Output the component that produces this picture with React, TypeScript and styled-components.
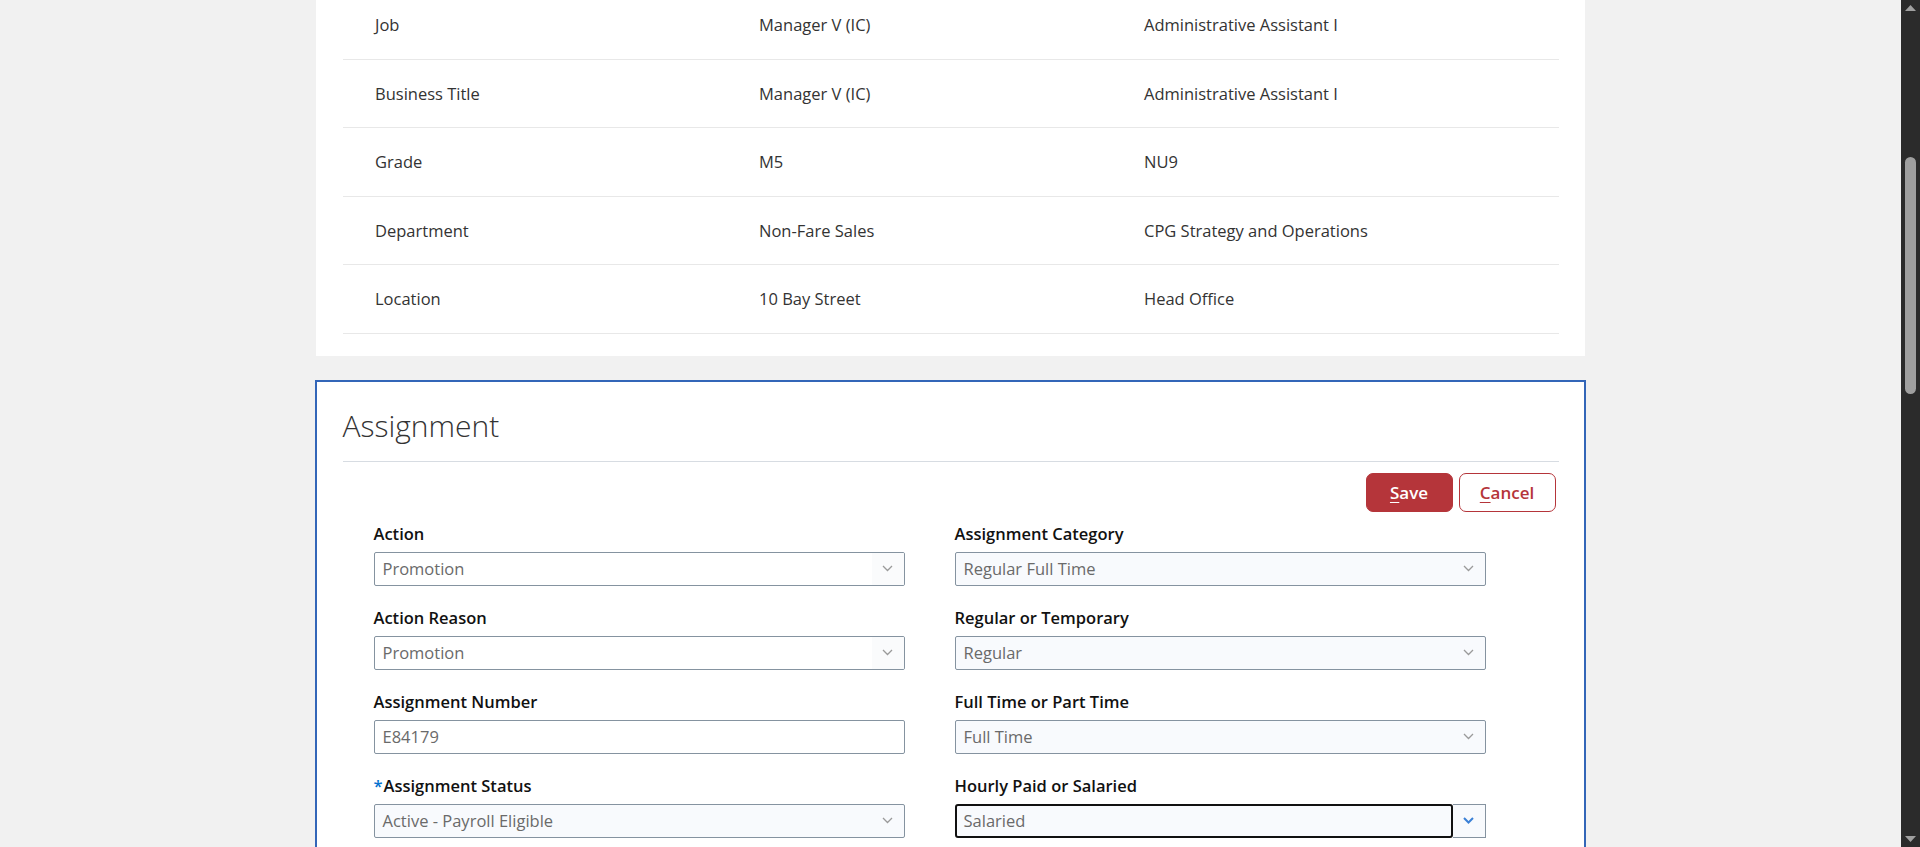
import React from "react";
import styled, { createGlobalStyle } from "styled-components";

const Global = createGlobalStyle`
  html, body { margin: 0; padding: 0; height: 847px; overflow: hidden; }
  body { font-family: "Open Sans", "Noto Sans", Arial, sans-serif; background: #f1f1f1; }
  * { box-sizing: border-box; }
`;

const Page = styled.div`
  display: flex;
  height: 847px;
  overflow: hidden;
  background: #f1f1f1;
`;

const Main = styled.main`
  flex: 1;
  display: flex;
  flex-direction: column;
  align-items: center;
  gap: 24px;
  margin-top: -9px;
`;

const Card = styled.section`
  width: 1269px;
  background: #fff;
  padding: 0 26px 22px 27px;
  flex-shrink: 0;
`;

const Row = styled.div`
  display: grid;
  grid-template-columns: 384px 385px 1fr;
  align-items: center;
  height: 68.5px;
  padding-left: 32px;
  border-bottom: 1px solid #e8e8e8;
  font-size: 16.5px;
  color: #333;
`;

const EditCard = styled.section`
  width: 1271px;
  margin-left: -1px;
  background: #fff;
  border: 2px solid #3366b8;
  padding: 0 25px 60px 26px;
  flex-shrink: 0;
`;

const Header = styled.div`
  padding: 25px 0 16px;
  border-bottom: 1px solid #d7dce2;
`;

const Title = styled.h2`
  margin: 0;
  font-size: 30px;
  line-height: 38px;
  font-weight: 300;
  color: #333;
`;

const Actions = styled.div`
  display: flex;
  justify-content: flex-end;
  gap: 6px;
  padding: 11px 3px 11px 0;
`;

const Btn = styled.button<{ $primary?: boolean }>`
  height: 39px;
  width: ${(p) => (p.$primary ? "87px" : "97px")};
  border-radius: 7px;
  border: 1px solid #b5353a;
  background: ${(p) => (p.$primary ? "#b5353a" : "#fff")};
  color: ${(p) => (p.$primary ? "#fff" : "#b5353a")};
  font-family: inherit;
  font-size: 17px;
  font-weight: 600;
  cursor: pointer;
  u { text-underline-offset: 3px; }
`;

const FormGrid = styled.div`
  display: grid;
  grid-template-columns: 531px 531px;
  column-gap: 50px;
  row-gap: 21px;
  padding-left: 31px;
  grid-auto-flow: column;
  grid-template-rows: repeat(4, auto);
`;

const Field = styled.div`
  display: flex;
  flex-direction: column;
  gap: 7px;
`;

const Label = styled.label`
  font-size: 16.5px;
  line-height: 22px;
  font-weight: 600;
  color: #111;
`;

const Req = styled.span`
  color: #0572ce;
  margin-right: 1px;
`;

const Box = styled.div<{ $tint?: boolean }>`
  display: flex;
  align-items: center;
  height: 34px;
  border: 1px solid #8593a0;
  border-radius: 2px;
  background: ${(p) => (p.$tint ? "#f8fafd" : "#fff")};
  overflow: hidden;
`;

const Value = styled.span`
  flex: 1;
  padding-left: 8px;
  font-size: 16.5px;
  color: #6a6a6a;
`;

const ChevronZone = styled.span<{ $tint?: boolean }>`
  width: 32px;
  height: 100%;
  display: flex;
  align-items: center;
  justify-content: center;
  background: ${(p) => (p.$tint ? "transparent" : "#fafbfc")};
`;

const Combo = styled.div`
  display: flex;
  height: 34px;
`;

const FocusBox = styled.div`
  flex: 1;
  display: flex;
  align-items: center;
  border: 2px solid #111;
  border-radius: 3px;
  background: #f8fafd;
  padding-left: 7px;
  font-size: 16.5px;
  color: #6a6a6a;
`;

const DropBtn = styled.span`
  width: 33px;
  display: flex;
  align-items: center;
  justify-content: center;
  border: 1px solid #8593a0;
  border-left: none;
  background: #f8fafd;
`;

const Track = styled.aside`
  width: 19px;
  background: #2b2b2b;
  display: flex;
  flex-direction: column;
  align-items: center;
  padding: 5px 0 5px;
`;

const Thumb = styled.div`
  width: 11px;
  height: 237px;
  margin-top: 146px;
  border-radius: 6px;
  background: #9f9f9f;
`;

const Spacer = styled.div`
  flex: 1;
`;

const Chevron = ({ color = "#9a9a9a", w = 1.3 }: { color?: string; w?: number }) => (
  <svg width="11" height="7" viewBox="0 0 11 7">
    <polyline points="1,1 5.5,5.5 10,1" fill="none" stroke={color} strokeWidth={w} />
  </svg>
);

const rows = [
  ["Job", "Manager V (IC)", "Administrative Assistant I"],
  ["Business Title", "Manager V (IC)", "Administrative Assistant I"],
  ["Grade", "M5", "NU9"],
  ["Department", "Non-Fare Sales", "CPG Strategy and Operations"],
  ["Location", "10 Bay Street", "Head Office"],
];

type F = { label: string; value: string; kind: "select" | "tselect" | "text" | "focus"; req?: boolean };

const fields: F[] = [
  { label: "Action", value: "Promotion", kind: "select" },
  { label: "Action Reason", value: "Promotion", kind: "select" },
  { label: "Assignment Number", value: "E84179", kind: "text" },
  { label: "Assignment Status", value: "Active - Payroll Eligible", kind: "tselect", req: true },
  { label: "Assignment Category", value: "Regular Full Time", kind: "tselect" },
  { label: "Regular or Temporary", value: "Regular", kind: "tselect" },
  { label: "Full Time or Part Time", value: "Full Time", kind: "tselect" },
  { label: "Hourly Paid or Salaried", value: "Salaried", kind: "focus" },
];

const Control = ({ f }: { f: F }) => {
  if (f.kind === "focus")
    return (
      <Combo>
        <FocusBox>{f.value}</FocusBox>
        <DropBtn>
          <Chevron color="#3b80d6" w={2} />
        </DropBtn>
      </Combo>
    );
  const tint = f.kind === "tselect";
  return (
    <Box $tint={tint}>
      <Value>{f.value}</Value>
      {f.kind !== "text" && (
        <ChevronZone $tint={tint}>
          <Chevron />
        </ChevronZone>
      )}
    </Box>
  );
};

export default function App() {
  return (
    <>
      <Global />
      <Page>
        <Main>
          <Card>
            {rows.map((r) => (
              <Row key={r[0]}>
                <span>{r[0]}</span>
                <span>{r[1]}</span>
                <span>{r[2]}</span>
              </Row>
            ))}
          </Card>
          <EditCard>
            <Header>
              <Title>Assignment</Title>
            </Header>
            <Actions>
              <Btn $primary>
                <u>S</u>ave
              </Btn>
              <Btn>
                <u>C</u>ancel
              </Btn>
            </Actions>
            <FormGrid>
              {fields.map((f) => (
                <Field key={f.label}>
                  <Label>
                    {f.req && <Req>*</Req>}
                    {f.label}
                  </Label>
                  <Control f={f} />
                </Field>
              ))}
            </FormGrid>
          </EditCard>
        </Main>
        <Track>
          <svg width="11" height="6" viewBox="0 0 11 6">
            <polygon points="0,6 5.5,0 11,6" fill="#a0a0a0" />
          </svg>
          <Thumb />
          <Spacer />
          <svg width="11" height="6" viewBox="0 0 11 6">
            <polygon points="0,0 5.5,6 11,0" fill="#a0a0a0" />
          </svg>
        </Track>
      </Page>
    </>
  );
}
